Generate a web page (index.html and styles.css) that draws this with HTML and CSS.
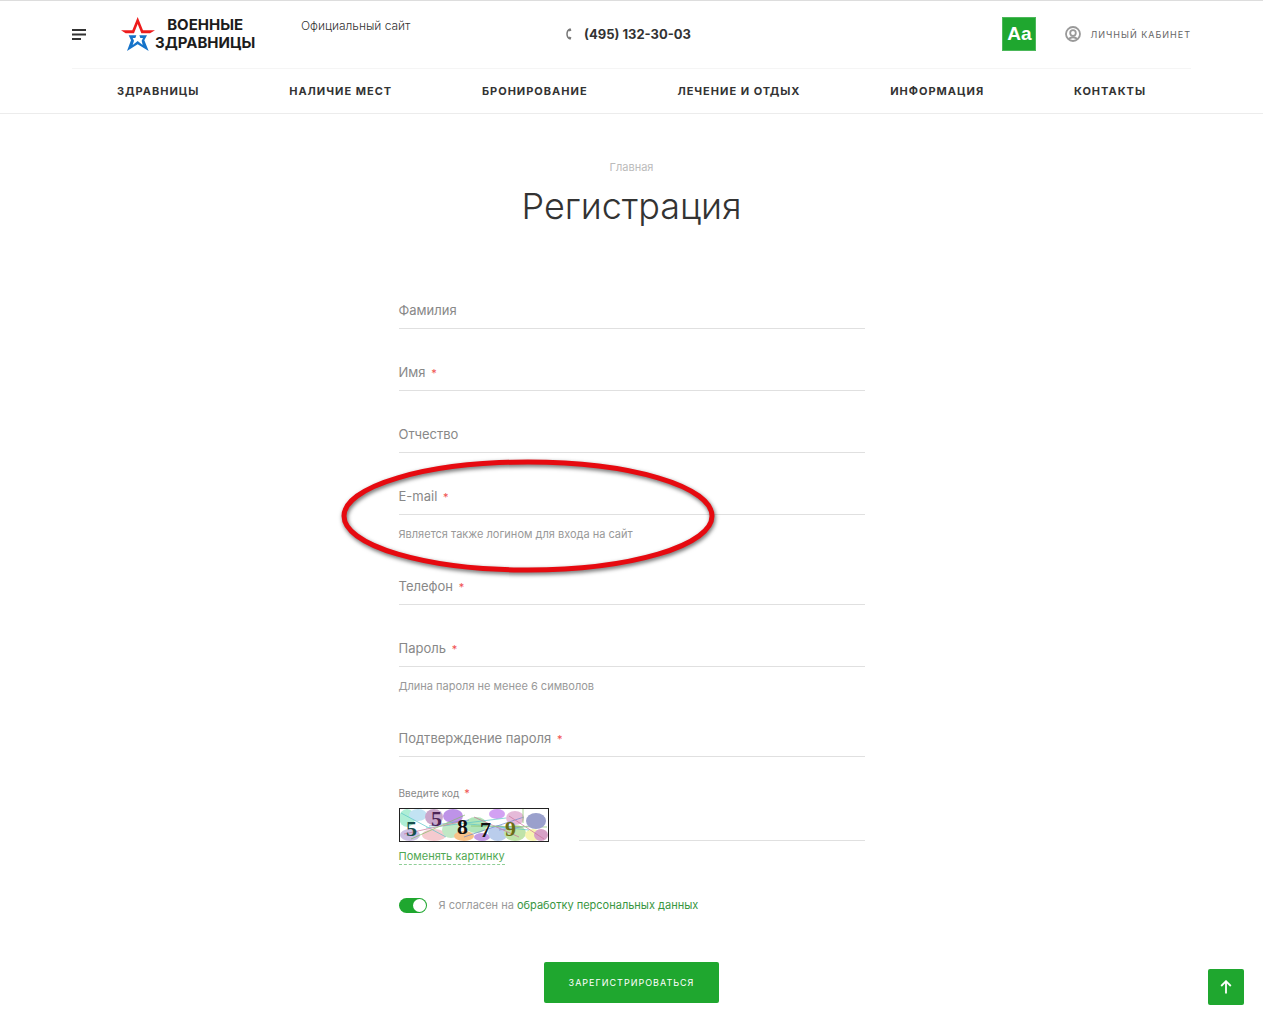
FILE: index.html
```html
<!DOCTYPE html>
<html lang="ru">
<head>
  <meta charset="UTF-8">
  <meta name="viewport" content="width=device-width, initial-scale=1">
  <title>Регистрация</title>
  <link rel="stylesheet" href="styles.css">
</head>
<body>

  <header class="header">
    <div class="header-top">
      <button type="button" class="burger" aria-label="Меню">
        <svg width="14" height="11" viewBox="0 0 14 11" fill="#333"><path d="M0 0h14v2H0zM0 4.500h14v2H0zM0 9h9v2H0z"/></svg>
      </button>
      <a href="#" class="logo">
        <svg width="34" height="34" viewBox="182 52 102 102">
          <path fill="#ed1c1c" d="M182 92h34l16-40 16 40h36l-15 9h-26l-11-28-11 28h-25z"/>
          <path fill="#1673c9" d="M205 107h23l-3 8h-8l4 8-4 13 15-12 15 12-3-13 4-8h-8l-3-8h23l-8 15 13 32-33-20-32 20 12-32z"/>
        </svg>
        <span class="logo-text"><span>ВОЕННЫЕ</span><span>ЗДРАВНИЦЫ</span></span>
      </a>
      <div class="tagline">Официальный сайт</div>
      <a href="tel:+74951323003" class="phone">
        <svg width="6" height="12" viewBox="0 0 6 12" fill="none" stroke="#777"><path stroke-width="1.500" d="M4.500 1Q1 2 1 6t3.500 5"/><path stroke-width="2" d="M3 2.500l2-1M3 9.500l2 1"/></svg>
        (495) 132-30-03
      </a>
      <button type="button" class="vision">Aa</button>
      <a href="#" class="account">
        <svg width="16" height="16" viewBox="0 0 16 16" fill="none" stroke="#999" stroke-width="1.800"><circle cx="8" cy="8" r="7"/><circle cx="8" cy="7" r="2.800"/><path d="M3.500 13Q8 9.500 12.500 13"/></svg>
        Личный кабинет
      </a>
    </div>
    <nav class="nav">
      <a href="#">Здравницы</a>
      <a href="#">Наличие мест</a>
      <a href="#">Бронирование</a>
      <a href="#">Лечение и отдых</a>
      <a href="#">Информация</a>
      <a href="#">Контакты</a>
    </nav>
  </header>

  <main class="main">
    <a href="#" class="breadcrumb">Главная</a>
    <h1>Регистрация</h1>

    <form class="form">
      <div class="field">
        <label for="lastName">Фамилия</label>
        <input type="text" id="lastName">
      </div>
      <div class="field">
        <label for="firstName">Имя <span class="star">*</span></label>
        <input type="text" id="firstName" required>
      </div>
      <div class="field">
        <label for="middleName">Отчество</label>
        <input type="text" id="middleName">
      </div>
      <div class="field">
        <label for="email">E-mail <span class="star">*</span></label>
        <input type="email" id="email" required>
        <p class="hint">Является также логином для входа на сайт</p>
        <svg class="marker" width="384" height="124" viewBox="0 0 384 124" fill="none" stroke="#e60a10" stroke-width="5"><ellipse cx="190" cy="61" rx="184" ry="54"/></svg>
      </div>
      <div class="field">
        <label for="phone">Телефон <span class="star">*</span></label>
        <input type="tel" id="phone" required>
      </div>
      <div class="field">
        <label for="password">Пароль <span class="star">*</span></label>
        <input type="password" id="password" required>
        <p class="hint">Длина пароля не менее 6 символов</p>
      </div>
      <div class="field">
        <label for="confirm">Подтверждение пароля <span class="star">*</span></label>
        <input type="password" id="confirm" required>
      </div>

      <div class="captcha">
        <label for="code">Введите код <span class="star">*</span></label>
        <div class="captcha-row">
          <svg class="captcha-image" width="150" height="34" viewBox="0 0 150 34">
            <rect width="150" height="34" fill="#fff"/>
            <g opacity="0.700">
              <ellipse cx="8" cy="10" rx="8" ry="9" fill="#8de8c4"/>
              <ellipse cx="19" cy="7" rx="9" ry="6" fill="#a9d8ef"/>
              <ellipse cx="11" cy="27" rx="10" ry="6" fill="#b8a4d8"/>
              <ellipse cx="35" cy="9" rx="9" ry="8" fill="#b583b6"/>
              <ellipse cx="35" cy="27" rx="12" ry="6" fill="#f2b4bc"/>
              <ellipse cx="54" cy="8" rx="10" ry="7" fill="#a366df"/>
              <ellipse cx="52" cy="22" rx="9" ry="8" fill="#a8dfae"/>
              <ellipse cx="65" cy="28" rx="10" ry="5" fill="#f6a958"/>
              <ellipse cx="77" cy="17" rx="11" ry="8" fill="#8fdb9c"/>
              <ellipse cx="98" cy="6" rx="8" ry="5" fill="#c07aee"/>
              <ellipse cx="83" cy="29" rx="8" ry="4" fill="#ac73db"/>
              <ellipse cx="99" cy="25" rx="10" ry="8" fill="#9eb9e5"/>
              <ellipse cx="116" cy="10" rx="9" ry="7" fill="#db9dca"/>
              <ellipse cx="116" cy="25" rx="11" ry="8" fill="#a6d885"/>
              <ellipse cx="134" cy="27" rx="8" ry="6" fill="#f3ef8e"/>
              <ellipse cx="142" cy="27" rx="7" ry="6" fill="#c77bb0"/>
            </g>
            <g fill="none" stroke-width="1" opacity="0.700">
              <path stroke="#5bc5c8" d="M2 5l45 24M27 20l80-10M50 14l80 8"/>
              <path stroke="#718bd0" d="M30 18l40-6M65 29l60-20M100 22l45-6"/>
              <path stroke="#cb7199" d="M5 26l60-13M75 9l45 20M110 8l35 23"/>
              <path stroke="#83be67" d="M12 31l54-24M72 18l76 1M124 1v14"/>
            </g>
            <ellipse cx="137" cy="13" rx="10" ry="8" fill="#9aa0cc"/>
            <g class="digits">
              <text x="7" y="28" fill="#174f4c">5</text>
              <text x="32" y="18" fill="#4c2356">5</text>
              <text x="58" y="26" fill="#111">8</text>
              <text x="81" y="29" fill="#111">7</text>
              <text x="106" y="28" fill="#6b6d16">9</text>
            </g>
            <rect x="0.500" y="0.500" width="149" height="33" fill="none" stroke="#222"/>
          </svg>
          <input type="text" id="code" required>
        </div>
        <button type="button" class="reload">Поменять картинку</button>
      </div>

      <div class="agree">
        <input type="checkbox" id="agree" class="toggle" checked>
        <label for="agree">Я согласен на <a href="#">обработку персональных данных</a></label>
      </div>

      <button type="submit" class="submit">Зарегистрироваться</button>
    </form>
  </main>

  <a href="#" class="to-top" aria-label="Наверх">
    <svg width="12" height="14" viewBox="0 0 12 14" fill="none" stroke="#fff" stroke-width="1.800"><path d="M6 13.500V1.500M1.200 6L6 1.200 10.800 6"/></svg>
  </a>

</body>
</html>
```
FILE: styles.css
```css
* {
  box-sizing: border-box;
}

body {
  margin: 0;
  font-family: Inter, "Open Sans", sans-serif;
  font-size: 13px;
  color: #333;
  background: #fff;
}

a {
  color: inherit;
  text-decoration: none;
}

button {
  padding: 0;
  border: 0;
  background: none;
  font-family: inherit;
  cursor: pointer;
}

svg {
  display: block;
  flex-shrink: 0;
}

.header {
  padding: 0 72px;
  border-top: 1px solid #ddd;
  border-bottom: 1px solid #ececec;
}

.header-top {
  display: grid;
  grid-template-columns: 49px 180px 265px 1fr auto auto;
  align-items: center;
  height: 68px;
  padding-bottom: 1px;
  border-bottom: 1px solid #f5f5f5;
}

.logo {
  display: flex;
  align-items: center;
}

.logo-text {
  display: flex;
  flex-direction: column;
  align-items: center;
  font-size: 15px;
  font-weight: 700;
  line-height: 18px;
  color: #1c1c1c;
}

.tagline {
  align-self: start;
  padding-top: 17px;
  font-size: 12px;
  font-weight: 300;
  line-height: 16px;
}

.phone {
  display: flex;
  align-items: center;
  gap: 12px;
  font-size: 13px;
  font-weight: 700;
}

.vision {
  width: 34px;
  height: 34px;
  margin-right: 29px;
  border: 1px solid #4cb85a;
  background: #1fa72f;
  color: #fff;
  font-family: "Liberation Sans", Arial, sans-serif;
  font-size: 19px;
  font-weight: 700;
}

.account {
  display: flex;
  align-items: center;
  gap: 9px;
  font-size: 9px;
  letter-spacing: 1px;
  text-transform: uppercase;
  color: #666;
}

.nav {
  display: flex;
  justify-content: space-around;
  font-size: 11px;
  font-weight: 700;
  line-height: 44px;
  letter-spacing: 1px;
  text-transform: uppercase;
}

.main {
  display: flex;
  flex-direction: column;
  align-items: center;
  padding: 44px 20px 22px;
}

.breadcrumb {
  font-size: 11px;
  line-height: 18px;
  color: #bbb;
}

h1 {
  margin: 9px 0 64px;
  font-size: 36px;
  font-weight: 300;
  line-height: 42px;
}

.form {
  display: flex;
  flex-direction: column;
  width: 100%;
  max-width: 466px;
  color: #888;
}

.field {
  position: relative;
  display: grid;
  margin-bottom: 24px;
}

/* the label sits in the same cell as the input */
.field label,
.field input {
  grid-area: 1 / 1;
}

.field label {
  justify-self: start;
  z-index: 1;
  line-height: 38px;
}

.field input,
.captcha input {
  width: 100%;
  height: 38px;
  padding: 0;
  border: 0;
  border-bottom: 1px solid #e0e0e0;
  outline: 0;
  background: none;
  font: inherit;
}

.star {
  margin-left: 2px;
  font-size: 11px;
  line-height: 1;
  color: #f05050;
}

.hint {
  margin: 10px 0 0;
  font-size: 11px;
  line-height: 18px;
  color: #999;
}

/* oval drawn over the e-mail field */
.marker {
  position: absolute;
  top: -22px;
  left: -61px;
  z-index: 2;
  pointer-events: none;
  filter: drop-shadow(1px 2px 2px rgba(0, 0, 0, 0.6));
}

.captcha {
  font-size: 10px;
}

.captcha label {
  display: block;
  line-height: 24px;
}

.captcha-row {
  display: flex;
  align-items: flex-end;
  gap: 30px;
  padding-top: 3px;
}

.captcha input {
  height: 32px;
  margin-bottom: 1px;
}

.digits {
  font-family: "Liberation Serif", serif;
  font-size: 22px;
  font-weight: 700;
}

.captcha-image {
  overflow: visible;
}

.reload {
  margin-top: 7px;
  border-bottom: 1px dashed #8fce96;
  font-size: 11px;
  line-height: 15px;
  color: #4fa852;
}

.agree {
  display: flex;
  align-items: center;
  gap: 12px;
  margin-top: 31px;
  font-size: 11px;
  line-height: 18px;
  color: #999;
}

.agree a {
  color: #38963f;
}

.toggle {
  display: flex;
  justify-content: flex-end;
  width: 28px;
  height: 15px;
  margin: 0;
  padding: 1px;
  appearance: none;
  border-radius: 8px;
  background: #1fa72f;
}

.toggle::before {
  content: "";
  width: 13px;
  height: 13px;
  border-radius: 50%;
  background: #fff;
}

.submit {
  align-self: center;
  width: 175px;
  height: 41px;
  margin-top: 48px;
  border-radius: 2px;
  background: #1fa72f;
  color: #fff;
  font-size: 9px;
  letter-spacing: 1px;
  text-transform: uppercase;
}

.to-top {
  position: fixed;
  right: 19px;
  bottom: 19px;
  display: flex;
  align-items: center;
  justify-content: center;
  width: 36px;
  height: 36px;
  border-radius: 2px;
  background: #1fa72f;
}
```
